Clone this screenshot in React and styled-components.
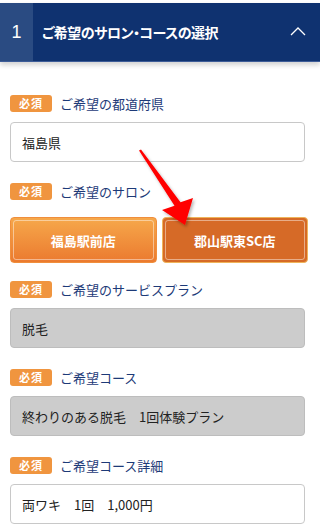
import React from "react";
import styled, { createGlobalStyle } from "styled-components";

const GlobalStyle = createGlobalStyle`
  html, body {
    margin: 0;
    padding: 0;
    background: #fff;
  }
  body {
    font-family: "Noto Sans CJK JP", "Noto Sans", sans-serif;
    width: 320px;
    overflow: hidden;
  }
`;

const Page = styled.div`
  position: relative;
  padding-top: 3px;
  width: 320px;
  height: 532px;
  box-sizing: border-box;
`;

const Header = styled.div`
  display: flex;
  align-items: stretch;
  height: 59px;
  background: #0f3270;
  border-bottom: 1px solid #3d5c98;
  box-shadow: 0 3px 5px rgba(0, 0, 0, 0.18);
  box-sizing: border-box;
`;

const StepNo = styled.div`
  width: 33px;
  display: flex;
  align-items: center;
  justify-content: center;
  background: #2a4b82;
  color: #fff;
  font-family: "Liberation Sans", Arial, sans-serif;
  font-size: 18px;
`;

const Title = styled.div`
  flex: 1;
  display: flex;
  align-items: center;
  padding-left: 9px;
  color: #fff;
  font-size: 14px;
  font-weight: bold;
  font-feature-settings: "palt";
  letter-spacing: -0.5px;
`;

const Chevron = styled.div`
  width: 44px;
  display: flex;
  align-items: center;
  justify-content: center;
  padding-bottom: 2px;
`;

const Body = styled.div`
  padding: 32px 15px 0 10px;
  display: flex;
  flex-direction: column;
`;

const Field = styled.div`
  display: flex;
  flex-direction: column;
  gap: 10px;
  margin-bottom: ${(p) => p.$mb || 20}px;
`;

const LabelRow = styled.div`
  display: flex;
  align-items: center;
  gap: 8px;
  height: 18px;
`;

const Badge = styled.span`
  width: 42px;
  height: 17px;
  display: flex;
  align-items: center;
  justify-content: center;
  background: #f0953f;
  border-radius: 3px;
  color: #fff;
  font-size: 11px;
  font-weight: bold;
  letter-spacing: 1px;
`;

const Label = styled.span`
  color: #1d3a78;
  font-size: 13px;
`;

const Box = styled.div`
  height: 40px;
  box-sizing: border-box;
  display: flex;
  align-items: center;
  padding-left: 11px;
  border: 1px solid ${(p) => (p.$disabled ? "#bdbdbd" : "#c8c8c8")};
  background: ${(p) => (p.$disabled ? "#cccccc" : "#fff")};
  border-radius: 4px;
  color: #222;
  font-size: 13px;
  white-space: pre;
`;

const ButtonRow = styled.div`
  display: flex;
  gap: 5px;
  width: 298px;
  margin-top: 7px;
`;

const SalonButton = styled.div`
  position: relative;
  flex: 1;
  height: 46px;
  box-sizing: border-box;
  display: flex;
  align-items: center;
  justify-content: center;
  border-radius: 4px;
  border: 1px solid ${(p) => (p.$active ? "#efb45a" : "#f08e3c")};
  background: ${(p) =>
    p.$active ? "#d66a27" : "linear-gradient(#f6a84b, #eb7a2f)"};
  color: #fff;
  font-size: 13px;
  font-weight: bold;

  &::after {
    content: "";
    position: absolute;
    inset: 2px;
    border: 1px solid rgba(255, 255, 255, 0.45);
    border-radius: 3px;
  }
`;

const Overlay = styled.svg`
  position: absolute;
  left: 0;
  top: 0;
  pointer-events: none;
`;

const App = () => {
  return (
    <Page>
      <GlobalStyle />
      <Header>
        <StepNo>1</StepNo>
        <Title>ご希望のサロン・コースの選択</Title>
        <Chevron>
          <svg width="16" height="9" viewBox="0 0 16 9">
            <path d="M1 8 L8 1 L15 8" fill="none" stroke="#fff" strokeWidth="1.3" />
          </svg>
        </Chevron>
      </Header>

      <Body>
        <Field>
          <LabelRow>
            <Badge>必須</Badge>
            <Label>ご希望の都道府県</Label>
          </LabelRow>
          <Box>福島県</Box>
        </Field>

        <Field $mb={17}>
          <LabelRow>
            <Badge>必須</Badge>
            <Label>ご希望のサロン</Label>
          </LabelRow>
          <ButtonRow>
            <SalonButton>福島駅前店</SalonButton>
            <SalonButton $active>郡山駅東SC店</SalonButton>
          </ButtonRow>
        </Field>

        <Field>
          <LabelRow>
            <Badge>必須</Badge>
            <Label>ご希望のサービスプラン</Label>
          </LabelRow>
          <Box $disabled>脱毛</Box>
        </Field>

        <Field>
          <LabelRow>
            <Badge>必須</Badge>
            <Label>ご希望コース</Label>
          </LabelRow>
          <Box $disabled>終わりのある脱毛　1回体験プラン</Box>
        </Field>

        <Field>
          <LabelRow>
            <Badge>必須</Badge>
            <Label>ご希望コース詳細</Label>
          </LabelRow>
          <Box>両ワキ　1回　1,000円</Box>
        </Field>
      </Body>

      <Overlay width="320" height="532" viewBox="0 0 320 532">
        <defs>
          <filter id="sh" x="-20%" y="-20%" width="140%" height="140%">
            <feDropShadow dx="1.5" dy="2" stdDeviation="1.5" floodColor="#000" floodOpacity="0.3" />
          </filter>
        </defs>
        <polygon
          points="139,150.5 141,149.5 180.5,202.2 193,198 185,225 162,210 174.5,205.8"
          fill="#ff0000"
          filter="url(#sh)"
        />
      </Overlay>
    </Page>
  );
};

export default App;
